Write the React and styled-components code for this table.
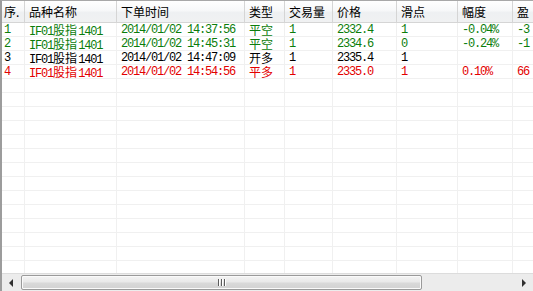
import React from "react";
import styled, { createGlobalStyle } from "styled-components";

const Global = createGlobalStyle`
  html, body { margin: 0; padding: 0; background: #ffffff; }
  body { width: 533px; height: 291px; overflow: hidden; }
`;

const COLS = [
  { key: "no", title: "序.", width: 23, pad: 2 },
  { key: "name", title: "品种名称", width: 92 },
  { key: "time", title: "下单时间", width: 128 },
  { key: "type", title: "类型", width: 40 },
  { key: "qty", title: "交易量", width: 48 },
  { key: "price", title: "价格", width: 64 },
  { key: "slip", title: "滑点", width: 61 },
  { key: "range", title: "幅度", width: 55 },
  { key: "pnl", title: "盈", width: 60 },
];

const ROWS = [
  { tone: "green", no: "1", name: "IF01股指1401", time: "2014/01/02 14:37:56", type: "平空", qty: "1", price: "2332.4", slip: "1", range: "-0.04%", pnl: "-3" },
  { tone: "green", no: "2", name: "IF01股指1401", time: "2014/01/02 14:45:31", type: "平空", qty: "1", price: "2334.6", slip: "0", range: "-0.24%", pnl: "-1" },
  { tone: "black", no: "3", name: "IF01股指1401", time: "2014/01/02 14:47:09", type: "开多", qty: "1", price: "2335.4", slip: "1", range: "", pnl: "" },
  { tone: "red", no: "4", name: "IF01股指1401", time: "2014/01/02 14:54:56", type: "平多", qty: "1", price: "2335.0", slip: "1", range: "0.10%", pnl: "66" },
];

const TONES = { green: "#0b7d0b", red: "#e30000", black: "#000000" };

const Frame = styled.div`
  width: 533px;
  height: 291px;
  box-sizing: border-box;
  border-left: 2px solid #9c9c9c;
  border-top: 1px solid #a8a8a8;
  display: flex;
  flex-direction: column;
  overflow: hidden;
`;

const GridArea = styled.div`
  flex: 1;
  overflow: hidden;
  display: flex;
  flex-direction: column;
`;

const HeaderRow = styled.div`
  display: flex;
  height: 22px;
  flex: none;
  box-sizing: border-box;
  border-bottom: 1px solid #d5d5d5;
  background: linear-gradient(#ffffff 0%, #f7f8f9 45%, #eef0f2 55%, #f0f1f2 100%);
`;

const HeaderCell = styled.div`
  flex: none;
  width: ${(p) => p.$w}px;
  box-sizing: border-box;
  padding-left: ${(p) => p.$pad}px;
  padding-top: 1px;
  border-right: 1px solid #d5d5d5;
  display: flex;
  align-items: center;
  font-family: "Noto Sans CJK SC", sans-serif;
  font-size: 12px;
  line-height: 1;
  color: #000;
  white-space: nowrap;
  overflow: hidden;
`;

const Row = styled.div`
  display: flex;
  height: 14px;
  flex: none;
  box-sizing: border-box;
  border-bottom: 1px solid #f0f0f0;
  color: ${(p) => TONES[p.$tone] || "#000"};
`;

const Cell = styled.div`
  flex: none;
  width: ${(p) => p.$w}px;
  box-sizing: border-box;
  padding-left: ${(p) => p.$pad}px;
  padding-top: 1px;
  border-right: 1px solid #f0f0f0;
  white-space: nowrap;
  font-family: "Liberation Mono", monospace;
  font-size: 12px;
  letter-spacing: -1.2px;
  line-height: 12px;
`;

const Cjk = styled.span`
  font-family: "Noto Sans CJK SC", sans-serif;
  font-size: 12px;
  letter-spacing: 0;
  line-height: 11px;
  margin-right: 1.2px;
`;

const ScrollBar = styled.div`
  flex: none;
  height: 18px;
  box-sizing: border-box;
  border-top: 1px solid #dcdcdc;
  background: #ececec;
  display: flex;
  align-items: stretch;
`;

const ArrowButton = styled.div`
  flex: none;
  width: 18px;
  display: flex;
  align-items: center;
  justify-content: center;
`;

const Track = styled.div`
  flex: 1;
  display: flex;
  align-items: stretch;
  padding: 1px;
`;

const Thumb = styled.div`
  flex: none;
  width: 401px;
  box-sizing: border-box;
  border: 1px solid #9a9a9a;
  border-radius: 2px;
  background: linear-gradient(#f4f4f4 0%, #e9e9e9 45%, #d9d9d9 55%, #d2d2d2 100%);
  box-shadow: inset 0 0 0 1px #fafafa;
  display: flex;
  align-items: center;
  justify-content: center;
`;

const Grip = styled.div`
  display: flex;
  gap: 1px;
`;

const GripLine = styled.span`
  width: 1px;
  height: 7px;
  background: #5c5c5c;
  box-shadow: 1px 0 0 #ffffff;
  margin-right: 1px;
`;

function splitCjk(text) {
  return text.split(/([\u4e00-\u9fff]+)/).filter(Boolean).map((part, i) =>
    /[\u4e00-\u9fff]/.test(part) ? <Cjk key={i}>{part}</Cjk> : <span key={i}>{part}</span>
  );
}

const padOf = (c) => (c.pad != null ? c.pad : 4);

export default function App() {
  const blanks = Array.from({ length: 20 }, (_, i) => i);
  return (
    <>
      <Global />
      <Frame>
        <GridArea>
          <HeaderRow>
            {COLS.map((c) => (
              <HeaderCell key={c.key} $w={c.width} $pad={padOf(c)}>
                {c.title}
              </HeaderCell>
            ))}
          </HeaderRow>
          {ROWS.map((r, i) => (
            <Row key={i} $tone={r.tone}>
              {COLS.map((c) => (
                <Cell key={c.key} $w={c.width} $pad={padOf(c)}>
                  {splitCjk(r[c.key])}
                </Cell>
              ))}
            </Row>
          ))}
          {blanks.map((i) => (
            <Row key={"b" + i}>
              {COLS.map((c) => (
                <Cell key={c.key} $w={c.width} $pad={padOf(c)} />
              ))}
            </Row>
          ))}
        </GridArea>
        <ScrollBar>
          <ArrowButton>
            <svg width="5" height="8" viewBox="0 0 5 8">
              <path d="M4 0 L0 4 L4 8 Z" fill="#303030" />
            </svg>
          </ArrowButton>
          <Track>
            <Thumb>
              <Grip>
                <GripLine />
                <GripLine />
                <GripLine />
              </Grip>
            </Thumb>
          </Track>
          <ArrowButton>
            <svg width="5" height="8" viewBox="0 0 5 8">
              <path d="M0 0 L4 4 L0 8 Z" fill="#303030" />
            </svg>
          </ArrowButton>
        </ScrollBar>
      </Frame>
    </>
  );
}
